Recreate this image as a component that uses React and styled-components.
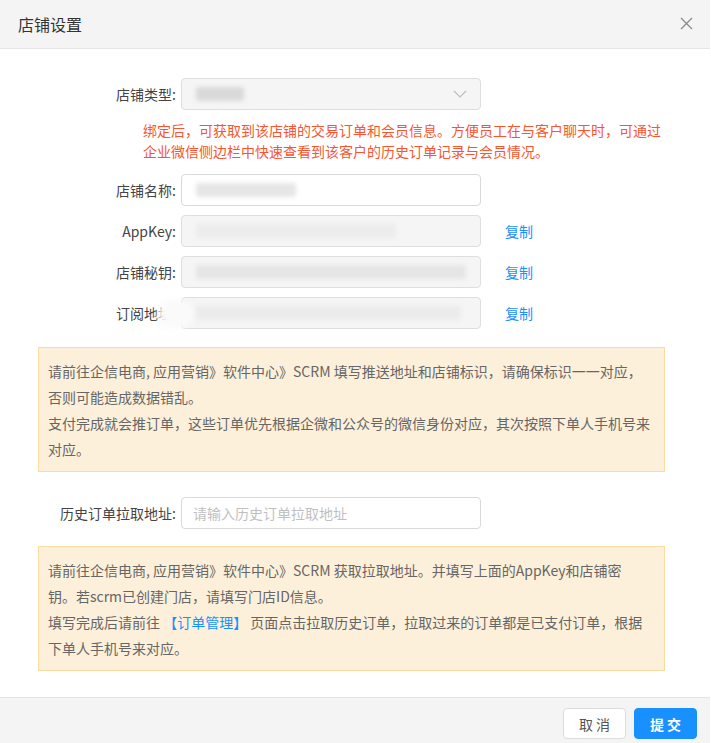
import React from 'react';
import styled, { createGlobalStyle } from 'styled-components';

const GlobalStyle = createGlobalStyle`
  html, body {
    margin: 0;
    padding: 0;
    background: #fff;
  }
  body {
    font-family: "Noto Sans CJK SC", "Noto Sans", sans-serif;
    font-size: 14px;
    color: #333;
  }
`

function App() {
  return (
    <>
      <GlobalStyle />
      <Dialog>
        <Header>
          <Title>店铺设置</Title>
          <CloseBtn aria-label="close">
            <svg width="13" height="13" viewBox="0 0 13 13">
              <path d="M1 1 L12 12 M12 1 L1 12" stroke="#8a8a8a" strokeWidth="1.3" fill="none" />
            </svg>
          </CloseBtn>
        </Header>

        <Body>
          <Row>
            <Label>店铺类型:</Label>
            <Field disabled>
              <Blur w={48} color="#d9d9d9" />
              <Chevron width="14" height="8" viewBox="0 0 14 8">
                <path d="M1 1 L7 7 L13 1" stroke="#bdbdbd" strokeWidth="1.2" fill="none" />
              </Chevron>
            </Field>
          </Row>

          <Warning>
            绑定后，可获取到该店铺的交易订单和会员信息。方便员工在与客户聊天时，可通过<br />
            企业微信侧边栏中快速查看到该客户的历史订单记录与会员情况。
          </Warning>

          <Row>
            <Label>店铺名称:</Label>
            <Field>
              <Blur w={100} color="#e6e6e6" />
            </Field>
          </Row>
          <Row>
            <Label>AppKey:</Label>
            <Field disabled>
              <Blur w={200} color="#ececec" />
            </Field>
            <CopyLink>复制</CopyLink>
          </Row>
          <Row>
            <Label>店铺秘钥:</Label>
            <Field disabled>
              <Blur w={270} color="#e5e5e5" />
            </Field>
            <CopyLink>复制</CopyLink>
          </Row>
          <Row>
            <Label>订阅地址:</Label>
            <Field disabled>
              <Smudge />
              <Blur w={265} color="#ebebeb" />
            </Field>
            <CopyLink>复制</CopyLink>
          </Row>

          <Notice>
            <p>请前往企信电商, 应用营销》软件中心》SCRM 填写推送地址和店铺标识，请确保标识一一对应，<br />否则可能造成数据错乱。</p>
            <p>支付完成就会推订单，这些订单优先根据企微和公众号的微信身份对应，其次按照下单人手机号来<br />对应。</p>
          </Notice>

          <Row top={25}>
            <Label>历史订单拉取地址:</Label>
            <Field>
              <Placeholder>请输入历史订单拉取地址</Placeholder>
            </Field>
          </Row>

          <Notice top={17}>
            <p>请前往企信电商, 应用营销》软件中心》SCRM 获取拉取地址。并填写上面的AppKey和店铺密<br />钥。若scrm已创建门店，请填写门店ID信息。</p>
            <p>填写完成后请前往 <Link>【订单管理】</Link> 页面点击拉取历史订单，拉取过来的订单都是已支付订单，根据<br />下单人手机号来对应。</p>
          </Notice>
        </Body>

        <Footer>
          <Button>取 消</Button>
          <Button primary>提 交</Button>
        </Footer>
      </Dialog>
    </>
  )
}

export default App

const Dialog = styled.div`
    width: 710px;
    height: 743px;
    display: flex;
    flex-direction: column;
    background: #fff;
    overflow: hidden;
`
const Header = styled.div`
    height: 48px;
    flex-shrink: 0;
    display: flex;
    align-items: center;
    justify-content: space-between;
    padding: 0 18px;
    background: #f4f4f4;
    border-bottom: 1px solid #e6e6e6;
`
const Title = styled.div`
    font-size: 16px;
    color: #333;
    line-height: 22px;
`
const CloseBtn = styled.div`
    display: flex;
    align-items: center;
    margin-right: -1px;
    margin-top: -2px;
`
const Body = styled.div`
    flex: 1;
    padding: 29px 45px 0 38px;
`
const Row = styled.div`
    display: flex;
    align-items: center;
    margin-top: ${p => (p.top != null ? p.top : 9)}px;
    &:first-child { margin-top: 0; }
`
const Label = styled.div`
    width: 143px;
    flex-shrink: 0;
    text-align: right;
    padding-right: 5px;
    box-sizing: border-box;
    color: #444;
    font-size: 14px;
    line-height: 20px;
    white-space: nowrap;
`
const Field = styled.div`
    position: relative;
    width: 300px;
    height: 32px;
    box-sizing: border-box;
    border: 1px solid ${p => (p.disabled ? '#dedede' : '#d9d9d9')};
    border-radius: 4px;
    background: ${p => (p.disabled ? '#f5f5f5' : '#fff')};
    display: flex;
    align-items: center;
    padding: 0 11px 0 14px;
`
const Blur = styled.span`
    display: block;
    width: ${p => p.w}px;
    height: 14px;
    background: ${p => p.color};
    filter: blur(2px);
    border-radius: 3px;
`
const Smudge = styled.span`
    position: absolute;
    left: -24px;
    top: 2px;
    width: 36px;
    height: 28px;
    background: #fafafa;
    border-radius: 14px;
    filter: blur(3px);
`
const Chevron = styled.svg`
    margin-left: auto;
    margin-right: 2px;
`
const Placeholder = styled.span`
    color: #bfbfbf;
    font-size: 14px;
    margin-left: -3px;
`
const CopyLink = styled.a`
    margin-left: 24px;
    color: #1890ff;
    font-size: 14px;
    cursor: pointer;
`
const Warning = styled.div`
    margin: 10px 0 12px 105px;
    color: #f9552f;
    font-size: 14px;
    line-height: 21px;
    white-space: nowrap;
`
const Notice = styled.div`
    margin-top: ${p => (p.top != null ? p.top : 18)}px;
    width: 627px;
    box-sizing: border-box;
    background: #fdf0da;
    border: 1px solid #f8dca2;
    padding: 10px 9px 9px;
    color: #666;
    font-size: 14px;
    line-height: 26px;
    white-space: nowrap;

    p {
        margin: 0;
    }
`
const Link = styled.span`
    color: #1890ff;
`
const Footer = styled.div`
    height: 46px;
    flex-shrink: 0;
    box-sizing: border-box;
    border-top: 1px solid #e4e4e4;
    background: #f4f4f4;
    display: flex;
    justify-content: flex-end;
    align-items: flex-start;
    gap: 8px;
    padding: 10px 13px 0 0;
`
const Button = styled.button`
    width: 63px;
    height: 31px;
    box-sizing: border-box;
    border-radius: 4px;
    border: 1px solid ${p => (p.primary ? '#1890ff' : '#dcdcdc')};
    background: ${p => (p.primary ? '#1890ff' : '#fff')};
    color: ${p => (p.primary ? '#fff' : '#555')};
    font-family: "Noto Sans CJK SC", sans-serif;
    font-size: 14px;
    font-weight: ${p => (p.primary ? 600 : 400)};
    padding: 0;
    cursor: pointer;
`
